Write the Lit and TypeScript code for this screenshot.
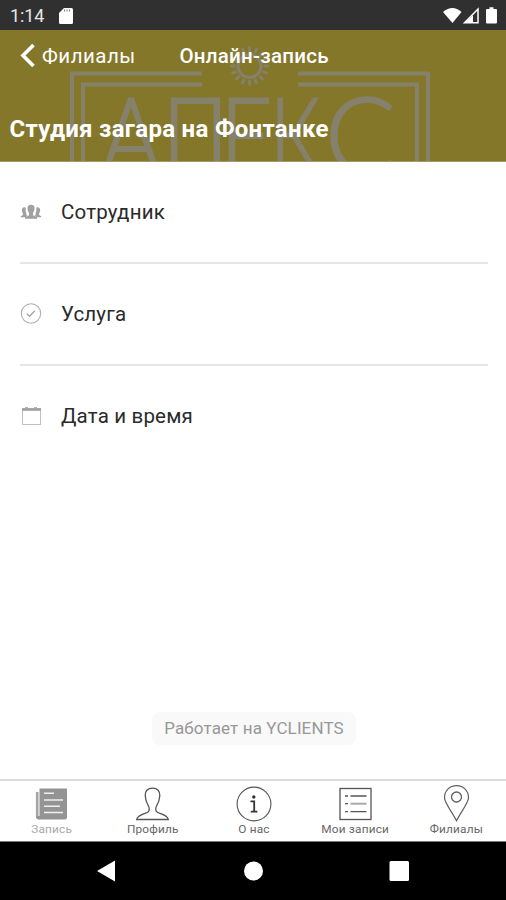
import { LitElement, html, css, svg } from "lit";
import { customElement } from "lit/decorators.js";
import { classMap } from "lit/directives/class-map.js";

const people = svg`
  <g fill="#a0a0a0">
    <path d="M4.500 3.200C2.500 3.200 1.800 4.600 1.900 6.400c0 1.500.6 2.400 1 3v1.600L.8 12.300v.9h5l1.500-1.500-1-1V9c-.8-1.500-.7-3.500-.5-5.200z"/>
    <path d="M17.500 3.200c2 0 2.700 1.400 2.600 3.200 0 1.500-.6 2.400-1 3v1.600l2.100 1.300v.9h-5l-1.500-1.500 1-1V9c.8-1.500.7-3.500.5-5.200z"/>
    <path d="M11 .8C8.500.8 7.300 2.400 7.500 4.800c.1 2 .8 3.200 1.500 4v2.400l-4 2v1.600h12v-1.600l-4-2V8.800c.7-.8 1.400-2 1.500-4 .2-2.400-1-4-3.500-4z"/>
  </g>`;
const check = svg`
  <g fill="none" stroke="#b0b0b0"><circle cx="11" cy="10.500" r="9.700" stroke-width="1.100"/>
  <path d="M6.800 10.800l2.700 2.500 5.300-5.600" stroke="#a4a4a4" stroke-width="1.300"/></g>`;
const calendar = svg`
  <rect x="2.500" y="3.500" width="18" height="16" fill="none" stroke="#c0c0c0"/>
  <path d="M2 4.500h19" stroke="#a0a0a0" stroke-width="2.600"/>
  <path d="M5 2.500h3M14 2.500h3" stroke="#b4b4b4"/>`;

const rows = [
  { label: "Сотрудник", icon: people, box: "0 -3 22 22" },
  { label: "Услуга", icon: check, box: "0 0 22 22" },
  { label: "Дата и время", icon: calendar, box: "0 0 22 22" },
];

const tabs = [
  {
    label: "Запись",
    active: true,
    icon: svg`<path d="M7.500 3.500H35v29q0 2-2 2H7.500z" fill="#949494"/>
      <path d="M5.200 7v24" stroke="#a4a4a4" stroke-width="2.600"/><path d="M4 31v1.500q.5 2 4 2v-3.500z" fill="#949494"/>
      <path d="M12 8.300h10M12 15h19M12 21.300h16M12 27.500h19" stroke="#f0f0f0" stroke-width="1.600"/>`,
  },
  {
    label: "Профиль",
    icon: svg`<path d="M19.500 3.200c-5 0-7.600 3-7.300 7.500.2 3.500.8 6.500 3.300 10.500.8 1 1 4.200.2 5.200-2 2.600-10.700 2.700-12 8.100h31.600c-1.300-5.400-10-5.500-12-8.100-.8-1-.6-4.200.2-5.200 2.500-4 3.100-7 3.300-10.500.3-4.500-2.300-7.500-7.300-7.500z" fill="none" stroke="#555" stroke-width="1.300"/>`,
  },
  {
    label: "О нас",
    icon: svg`<circle cx="20" cy="19" r="16.900" fill="none" stroke="#555" stroke-width="1.100"/>
      <circle cx="19.800" cy="12" r="1.700" fill="#333"/>
      <path d="M16.500 16.300h3.700v10M16.800 26.600h6.600" fill="none" stroke="#333" stroke-width="1.800"/>`,
  },
  {
    label: "Мои записи",
    icon: svg`<rect x="4" y="3.500" width="31" height="31" fill="none" stroke="#555" stroke-width="1.300"/>
      <path d="M9 11h3M14.500 11h16M9 18.700h3M9 26.700h3M14.500 26.700h16" stroke="#555" stroke-width="1.300"/>
      <path d="M14.500 18.700h16" stroke="#aaa" stroke-width="2"/>`,
  },
  {
    label: "Филиалы",
    icon: svg`<path d="M19.500.6c-7 0-12 5.400-12 11.900 0 5.500 7.500 14 12 23.300 4.500-9.300 12-17.800 12-23.300 0-6.500-5-11.900-12-11.900z" fill="none" stroke="#606060" stroke-width="1.200"/>
      <circle cx="19.500" cy="12" r="5" fill="none" stroke="#606060" stroke-width="1.300"/>`,
  },
];

@customElement("app-root")
export class AppRoot extends LitElement {
  static styles = css`
    :host { display: flex; flex-direction: column; width: 506px; height: 900px; overflow: hidden; background: #fff; font-family: Roboto, "Liberation Sans", sans-serif; color: #2a2a2a; }
    * { box-sizing: border-box; }
    svg { display: block; flex: none; }
    .status { height: 30px; flex: none; background: #303030; color: #e6e6e6; display: flex; align-items: center; padding: 1px 0 0 10px; font-size: 18px; }
    .clock { width: 48px; letter-spacing: -0.1px; }
    .signals { margin-left: auto; }
    .header { height: 132px; flex: none; background: #84772a; color: #fff; position: relative; overflow: hidden; border-bottom: 1px solid #a49b63; }
    .emblem { position: absolute; left: 0; top: 0; }
    .emblem text { font-family: Lato, Roboto, sans-serif; font-weight: 300; font-size: 107px; }
    .bar { position: relative; display: grid; grid-template-columns: 159.5px 1fr; align-items: center; height: 52px; padding-left: 20px; }
    .back { display: flex; align-items: center; gap: 7px; font-size: 20.5px; letter-spacing: 0.5px; }
    .title { font-size: 20.5px; letter-spacing: 0.25px; font-weight: 500; }
    .studio { position: relative; margin: 33px 0 0 9.5px; font-size: 24px; letter-spacing: 0.3px; line-height: 28px; font-weight: 700; white-space: nowrap; }
    .rows { flex: 1; padding: 0 18px 0 20px; }
    .row { height: 102px; display: flex; align-items: center; gap: 19px; font-size: 20.5px; letter-spacing: 0.18px; border-bottom: 2px solid #e6e6e6; }
    .row:last-child { border-color: transparent; }
    .powered { align-self: center; width: 204px; height: 33px; flex: none; border-radius: 8px; background: #f9f9f9; color: #989898; font-size: 17px; letter-spacing: 0.12px; line-height: 33px; text-align: center; margin: 0 0 34px 2px; }
    .tabs { height: 63px; flex: none; border-top: 2px solid #dcdcdc; border-bottom: 1px solid #777; display: grid; grid-template-columns: repeat(5, 1fr); padding-left: 1px; margin-right: -1px; }
    .tab { display: flex; flex-direction: column; align-items: center; padding-top: 4px; font-size: 11.8px; letter-spacing: 0.2px; line-height: 15px; color: #666; white-space: nowrap; }
    .active { color: #a8a8a8; }
    .nav { height: 58px; flex: none; background: #000; }
  `;

  render() {
    return html`
      <div class="status">
        <span class="clock">1:14</span>
        <svg width="16" height="18" viewBox="0 0 16 18"><path d="M6 1h7.500q1.500 0 1.500 1.500v13q0 1.500-1.500 1.500h-11q-1.500 0-1.500-1.500V6z" fill="#fff"/><path d="M6.500 2.500v2M9 2.500v2M11.500 2.500v2" stroke="#777"/></svg>
        <svg class="signals" width="63" height="20" viewBox="0 0 63 20"><path d="M0 6Q9.500-2 18.500 6L9.500 17z" fill="#fff"/>
          <path d="M21.500 16.700L35 3v13.700z" fill="none" stroke="#fff" stroke-width="1.500"/><path d="M22 16.700l8-7.500v7.500z" fill="#fff"/>
          <path d="M44 3h2.500V1.200h4V3H53q1 0 1 1v12.500q0 1-1 1h-9q-1 0-1-1V4q0-1 1-1z" fill="#fff"/></svg>
      </div>
      <div class="header">
        <svg class="emblem" width="506" height="132" viewBox="0 30 506 132">
          <g fill="none" stroke="#85816b" stroke-width="4">
            <path d="M202 73.500H72V162M202 84.500H83V162M298 73.500H428V162M298 84.500H417V162"/>
            <circle cx="249.500" cy="66" r="11.500" stroke-width="3"/>
            <g stroke-width="2.800">${Array.from({ length: 16 }, (_, i) => svg`<path d="M249.500 52v-5.500" transform="rotate(${i * 22.5} 249.500 66)"/>`)}</g>
          </g>
          <g fill="#85816b" stroke="#85816b" stroke-width="2">
            <text x="101" y="174" textLength="60" lengthAdjust="spacingAndGlyphs">А</text>
            <text x="162" y="174" textLength="67" lengthAdjust="spacingAndGlyphs">П</text>
            <text x="220" y="174" textLength="53" lengthAdjust="spacingAndGlyphs">Е</text>
            <text x="270" y="174" textLength="50" lengthAdjust="spacingAndGlyphs">К</text>
            <text x="325" y="174" textLength="71" lengthAdjust="spacingAndGlyphs">С</text>
          </g>
        </svg>
        <div class="bar">
          <div class="back"><svg width="15" height="26" viewBox="0 0 15 26"><path d="M13.500 2L3 12.500 13.500 23" fill="none" stroke="#fff" stroke-width="3.600"/></svg><span>Филиалы</span></div>
          <div class="title">Онлайн-запись</div>
        </div>
        <div class="studio">Студия загара на Фонтанке</div>
      </div>
      <div class="rows">
        ${rows.map((r) => html`<div class="row"><svg width="22" height="22" viewBox=${r.box}>${r.icon}</svg><span>${r.label}</span></div>`)}
      </div>
      <div class="powered">Работает на YCLIENTS</div>
      <div class="tabs">
        ${tabs.map((t) => html`<div class=${classMap({ tab: true, active: !!t.active })}><svg width="39" height="37" viewBox="0 0 39 37">${t.icon}</svg><span>${t.label}</span></div>`)}
      </div>
      <div class="nav">
        <svg width="506" height="58" viewBox="0 842 506 58" fill="#fff"><path d="M97 871l18-10.500v21z"/><circle cx="253.500" cy="871" r="9.500"/><rect x="389.500" y="861" width="19.500" height="20" rx="1.500"/></svg>
      </div>
    `;
  }
}
